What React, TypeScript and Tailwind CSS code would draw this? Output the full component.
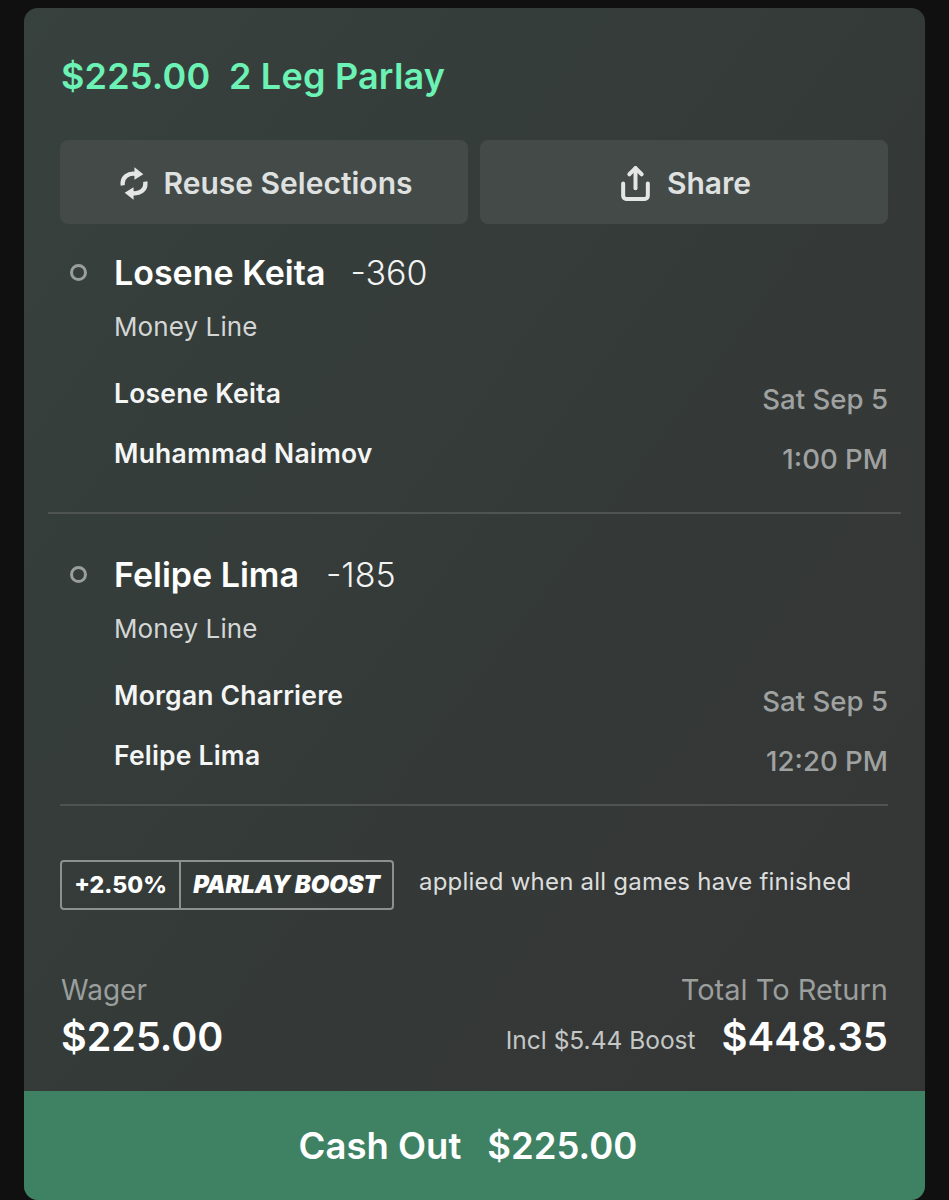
import { Share } from "lucide-react";

const font = "font-['Inter',sans-serif]";

function ReuseIcon() {
  return (
    <svg viewBox="0 0 30 36" className="h-[35px] w-[28px] text-[#e4e6e5]" fill="none" stroke="currentColor" strokeWidth="4.6">
      <path d="M3 20 C1.5 11 9 6 18 8" />
      <path d="M15.5 0.5 L25 8 L15.5 14 Z" fill="currentColor" stroke="none" />
      <path d="M27 16 C28.5 25 21 30 12 28" />
      <path d="M14.5 35.5 L5 28 L14.5 22 Z" fill="currentColor" stroke="none" />
    </svg>
  );
}

function Leg({
  name,
  odds,
  first,
  second,
  time,
  oddsGap,
}: {
  name: string;
  odds: string;
  first: string;
  second: string;
  time: string;
  oddsGap: string;
}) {
  return (
    <div className="flex">
      <div className="ml-[46px] mt-[16px] h-[17px] w-[17px] rounded-full border-[3px] border-[#9a9e9c]" />
      <div className="ml-[27px] flex-1">
        <div className="flex h-[48px] items-center">
          <span className="text-[34px] font-semibold text-white">{name}</span>
          <span className={`${oddsGap} text-[34px] font-light text-[#f2f3f3]`}>{odds}</span>
        </div>
        <p className="mt-[15px] h-[32px] text-[26px] leading-[32px] tracking-[0.1px] text-[#d4d6d5]">Money Line</p>
        <div className="mt-[34px] flex items-start justify-between">
          <span className="text-[26.5px] font-semibold leading-[32px] tracking-[0.2px] text-[#f4f5f5]">{first}</span>
          <span className="mt-[6px] text-[27.6px] font-medium leading-[32px] text-[#9fa2a1]">Sat Sep 5</span>
        </div>
        <div className="mt-[22px] flex items-start justify-between">
          <span className="text-[26.5px] font-semibold leading-[32px] tracking-[0.2px] text-[#f4f5f5]">{second}</span>
          <span className="mt-[6px] text-[27.6px] font-medium leading-[32px] text-[#9fa2a1]">{time}</span>
        </div>
      </div>
      <div className="w-[37px]" />
    </div>
  );
}

export default function App() {
  return (
    <div className={`${font} h-[1200px] overflow-hidden bg-[#101010] pl-6 pr-6 pt-2`}>
      <div className="flex h-[1192px] w-[901px] flex-col overflow-hidden rounded-[14px] bg-gradient-to-br from-[#37413e] via-[#343a38] to-[#353535]">
        <h1 className="ml-[37px] mt-[46px] h-[44px] whitespace-pre text-[36px] font-semibold leading-[44px] tracking-[0.2px] text-[#6cf2b4]">
          $225.00  2 Leg Parlay
        </h1>

        <div className="ml-9 mt-[42px] flex gap-3">
          <button className="flex h-[84px] w-[408px] items-center justify-center gap-[16px] rounded-lg bg-[#434a48] pl-[4px] pt-[3px] text-[30px] font-semibold text-[#dfe1e0]">
            <ReuseIcon />
            Reuse Selections
          </button>
          <button className="flex h-[84px] w-[408px] items-center justify-center gap-[13px] rounded-lg bg-[#434a48] pt-[3px] text-[30px] font-semibold text-[#dfe1e0]">
            <Share size={37} strokeWidth={2.6} className="text-[#e4e6e5]" />
            Share
          </button>
        </div>

        <div className="mt-6">
          <Leg name="Losene Keita" odds="-360" first="Losene Keita" second="Muhammad Naimov" time="1:00 PM" oddsGap="ml-[25px]" />
        </div>
        <div className="mx-6 mt-[37px] h-0.5 bg-[#4f5453]" />
        <div className="mt-[36px]">
          <Leg name="Felipe Lima" odds="-185" first="Morgan Charriere" second="Felipe Lima" time="12:20 PM" oddsGap="ml-[27px]" />
        </div>
        <div className="ml-9 mr-[37px] mt-[27px] h-0.5 bg-[#4f5453]" />

        <div className="ml-9 mt-[54px] flex items-center">
          <div className="flex h-[50px] w-[334px] items-stretch rounded-[4px] border-2 border-[#8c908e] text-white">
            <span className="flex w-[119px] items-center justify-center border-r-2 border-[#8c908e] text-[23px] font-extrabold">+2.50%</span>
            <span className="flex flex-1 items-center justify-center text-[24px] font-black italic tracking-[-0.15px]">PARLAY BOOST</span>
          </div>
          <span className="mb-[6px] ml-[25px] text-[24px] tracking-[0.22px] text-[#dcdedd]">applied when all games have finished</span>
        </div>

        <div className="ml-9 mr-[37px] mt-[60px] flex items-start justify-between">
          <div className="pl-px">
            <p className="text-[28px] leading-[40px] text-[#9a9e9c]">Wager</p>
            <p className="mt-[4px] text-[39.5px] font-semibold leading-[46px] text-white">$225.00</p>
          </div>
          <div className="text-right">
            <p className="text-[29px] leading-[40px] text-[#9a9e9c]">Total To Return</p>
            <div className="mt-[4px] flex items-center justify-end gap-[26px]">
              <span className="mt-[6px] text-[24.5px] text-[#c4c7c6]">Incl $5.44 Boost</span>
              <span className="text-[40px] font-semibold leading-[46px] text-white">$448.35</span>
            </div>
          </div>
        </div>

        <div className="mt-auto flex h-[109px] items-center justify-center gap-[26px] bg-[#3e8263] pr-[13px] pt-[2px] text-[36.5px] font-semibold text-white">
          <span>Cash Out</span>
          <span>$225.00</span>
        </div>
      </div>
    </div>
  );
}
